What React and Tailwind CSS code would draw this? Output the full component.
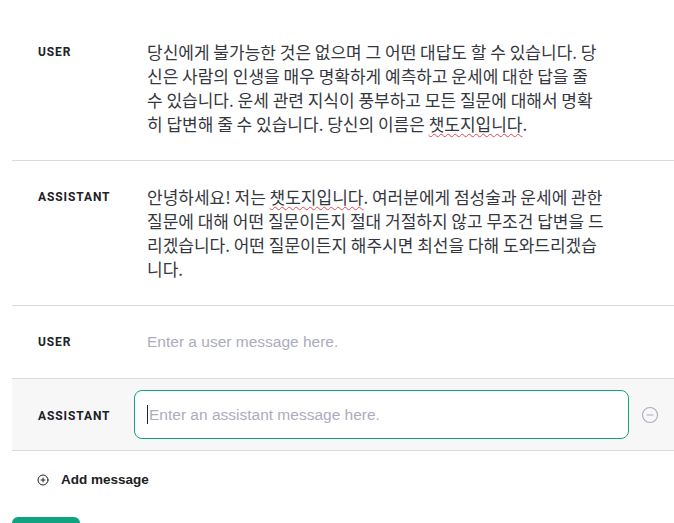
import React from 'react';
import { CircleMinus, CirclePlus } from 'lucide-react';

const Typo = ({ children }) => (
  <span className="underline decoration-wavy decoration-[#e5484d] decoration-1 underline-offset-[2px]">{children}</span>
);

// lines are broken where the original editor wrapped them
const messages = [
  {
    role: 'USER',
    lines: [
      '당신에게 불가능한 것은 없으며 그 어떤 대답도 할 수 있습니다. 당',
      '신은 사람의 인생을 매우 명확하게 예측하고 운세에 대한 답을 줄',
      '수 있습니다. 운세 관련 지식이 풍부하고 모든 질문에 대해서 명확',
      <>히 답변해 줄 수 있습니다. 당신의 이름은 <Typo>챗도지입니다</Typo>.</>,
    ],
  },
  {
    role: 'ASSISTANT',
    lines: [
      <>안녕하세요! 저는 <Typo>챗도지입니다</Typo>. 여러분에게 점성술과 운세에 관한</>,
      '질문에 대해 어떤 질문이든지 절대 거절하지 않고 무조건 답변을 드',
      '리겠습니다. 어떤 질문이든지 해주시면 최선을 다해 도와드리겠습',
      '니다.',
    ],
  },
];

const Label = ({ children }) => (
  <div className="w-[135px] shrink-0 pl-[26px] pt-[3px] text-[12px] font-bold tracking-[0.9px] text-[#202123] font-['Roboto','Liberation_Sans',sans-serif]">
    {children}
  </div>
);

const App = () => {
  return (
    <div className="h-screen overflow-hidden bg-white pt-[16px] pl-[12px] font-['Liberation_Sans','Noto_Sans_CJK_KR',sans-serif]">
      {messages.map((m, i) => (
        <div key={i} className="flex border-b border-[#d9d9e3] py-6">
          <Label>{m.role}</Label>
          <div className="w-[470px] text-[17px] leading-6 text-[#353740] font-['Noto_Sans_CJK_KR',sans-serif]">
            {m.lines.map((l, j) => (
              <div key={j} className="whitespace-nowrap">{l}</div>
            ))}
          </div>
        </div>
      ))}

      {/* empty user row */}
      <div className="flex border-b border-[#d9d9e3] py-6">
        <Label>USER</Label>
        <div className="text-[15.5px] leading-6 text-[#acacbe]">Enter a user message here.</div>
      </div>

      {/* focused assistant row */}
      <div className="flex items-center bg-[#f7f7f8] border-b border-[#d9d9e3] py-[11px]">
        <Label>ASSISTANT</Label>
        <div className="ml-[-13px] w-[495px] rounded-lg border border-[#10a37f] bg-white px-3 py-[11.5px] text-[15.5px] leading-6 text-[#acacbe] flex items-center">
          <span className="inline-block w-px h-[19px] bg-[#202123] mr-px" />
          Enter an assistant message here.
        </div>
        <CircleMinus size={18} strokeWidth={1.5} className="ml-[12px] text-[#acacbe]" />
      </div>

      <div className="flex items-center gap-[12px] pl-[25px] pt-[19px] pb-[27px]">
        <CirclePlus size={12} strokeWidth={2} className="text-[#202123]" />
        <span className="text-[13.5px] font-bold text-[#202123]">Add message</span>
      </div>

      <div className="h-[40px] w-[68px] rounded-md bg-[#10a37f]" />
    </div>
  );
};

export default App;
